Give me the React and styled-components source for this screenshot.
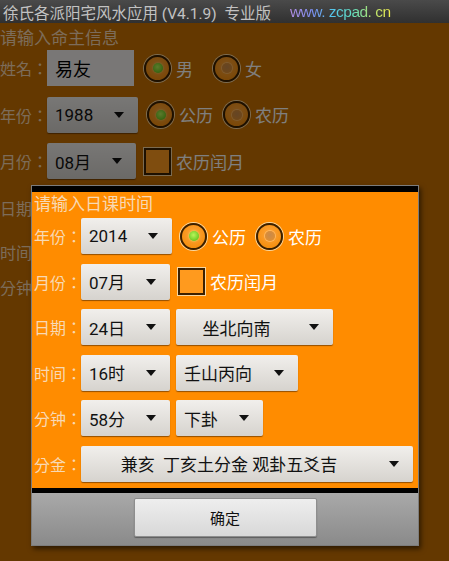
import React from "react";
import styled, { createGlobalStyle } from "styled-components";

const GlobalStyle = createGlobalStyle`
  html, body {
    margin: 0;
    padding: 0;
    background: #643700;
  }
  body {
    font-family: Roboto, "Noto Sans CJK SC", "Noto Sans", sans-serif;
  }
`;

const Screen = styled.div`
  width: 449px;
  height: 561px;
  overflow: hidden;
  display: flex;
  flex-direction: column;
`;

const TitleBar = styled.div`
  height: 23px;
  flex-shrink: 0;
  display: flex;
  align-items: center;
  padding-left: 3px;
  background: linear-gradient(#4a4a4a, #303030);
  box-sizing: border-box;
`;

const AppTitle = styled.span`
  font-size: 15.5px;
  color: #c2c2c2;
  white-space: pre;
`;

const SiteUrl = styled.span`
  margin-left: 19px;
  font-family: "Liberation Sans", Arial, sans-serif;
  font-size: 15.5px;
  letter-spacing: -0.5px;
  white-space: pre;
  background: linear-gradient(90deg, #b58ee6 0%, #7c8ef0 22%, #54c6ec 42%, #63e0c0 62%, #a6e07a 78%, #f2ec4c 100%);
  -webkit-background-clip: text;
  background-clip: text;
  color: transparent;
`;

const Content = styled.div`
  position: relative;
  flex: 1;
  background: #c87000;
`;

const Scrim = styled.div`
  position: absolute;
  inset: 0;
  background: rgba(0, 0, 0, 0.5);
`;

const Form = styled.div`
  display: flex;
  flex-direction: column;
  gap: 10.5px;
  padding-top: 3px;
`;

const Heading = styled.div`
  font-size: 17px;
  line-height: ${(p) => p.$h}px;
  height: ${(p) => p.$h}px;
  color: #f8d9b4;
  white-space: nowrap;
  margin-bottom: ${(p) => p.$mb || 0}px;
`;

const Row = styled.div`
  display: flex;
  align-items: center;
  height: 36px;
  margin-top: ${(p) => p.$mt || 0}px;
`;

const Label = styled.span`
  width: 47px;
  flex-shrink: 0;
  font-family: "Noto Sans CJK TC", "Noto Sans CJK SC", sans-serif;
  font-size: 16px;
  white-space: nowrap;
  color: #f8d9b4;
`;

const TextBox = styled.div`
  width: 87px;
  height: 36px;
  box-sizing: border-box;
  padding-left: 8px;
  display: flex;
  align-items: center;
  font-size: 18px;
  color: #000;
  background: #f2efec;
`;

const Spinner = styled.div`
  width: ${(p) => p.$w}px;
  height: 36px;
  box-sizing: border-box;
  margin-right: 6px;
  padding: 0 14px 0 8px;
  display: flex;
  align-items: center;
  gap: 8px;
  font-size: 17px;
  color: #111;
  border-radius: 2px;
  background: linear-gradient(#f1efec, #d6d3ce);
  box-shadow: 0 1px 1px rgba(60, 30, 0, 0.55);
  flex-shrink: 0;
`;

const SpinnerText = styled.span`
  flex: 1;
  text-align: ${(p) => (p.$center ? "center" : "left")};
  padding-right: ${(p) => (p.$center ? 12 : 0)}px;
  white-space: pre;
`;

const Arrow = styled.span`
  width: 0;
  height: 0;
  border-left: 5.5px solid transparent;
  border-right: 5.5px solid transparent;
  border-top: 6px solid #111;
`;

const Radio = styled.span`
  width: 27px;
  height: 27px;
  box-sizing: border-box;
  border-radius: 50%;
  border: 2px solid #3b2000;
  box-shadow: 0 0 0 1px #f7d7a2;
  background: radial-gradient(circle at 50% 40%, #ffa53c, #f28800);
  display: flex;
  align-items: center;
  justify-content: center;
  flex-shrink: 0;
  &::after {
    content: "";
    width: 10px;
    height: 10px;
    border-radius: 50%;
    background: ${(p) =>
      p.$on
        ? "radial-gradient(circle at 45% 40%, #b8f55a, #4fb80e)"
        : "radial-gradient(circle at 50% 40%, #c98a4a, #e5902c)"};
    box-shadow: ${(p) => (p.$on ? "0 0 2px #d8ff90" : "0 0 0 1px rgba(255,210,150,0.5)")};
  }
`;

const CheckBox = styled.span`
  width: 27px;
  height: 27px;
  box-sizing: border-box;
  border: 2px solid #3b2000;
  box-shadow: 0 0 0 1px #f7d7a2;
  background: #ff9a1e;
  flex-shrink: 0;
`;

const Option = styled.span`
  font-size: 17px;
  color: #fff;
  white-space: nowrap;
  margin: 0 ${(p) => p.$mr || 8}px 0 5px;
`;

const Choice = styled.div`
  display: flex;
  align-items: center;
  margin-left: ${(p) => p.$ml || 2}px;
`;

const Dialog = styled.div`
  position: absolute;
  left: 31px;
  top: 162px;
  width: 388px;
  box-sizing: border-box;
  border: 1px solid #7c7c7c;
  box-shadow: 2px 3px 5px rgba(0, 0, 0, 0.55);
  background: #000;
  padding-top: 6px;
  display: flex;
  flex-direction: column;
`;

const DialogBody = styled.div`
  background: #ff8c00;
  padding: 4px 4px 6px 2px;
  display: flex;
  flex-direction: column;
  gap: 9.6px;
`;

const ButtonBar = styled.div`
  margin-top: 5px;
  height: 52px;
  box-sizing: border-box;
  padding-top: 5px;
  display: flex;
  justify-content: center;
  background: linear-gradient(#a9a9a9, #8a8a8a);
`;

const OkButton = styled.button`
  width: 183px;
  height: 39px;
  border: 1px solid #8e8e8e;
  border-radius: 2px;
  background: linear-gradient(#eeeeee, #d8d8d8);
  box-shadow: 0 1px 1px rgba(0, 0, 0, 0.35);
  font-family: "Noto Sans CJK SC", sans-serif;
  font-size: 15px;
  color: #111;
`;

function Select({ w, text, center }) {
  return (
    <Spinner $w={w}>
      <SpinnerText $center={center}>{text}</SpinnerText>
      <Arrow />
    </Spinner>
  );
}

function CalendarChoice({ ml }) {
  return (
    <Choice $ml={ml}>
      <Radio $on />
      <Option $mr={10}>公历</Option>
      <Radio />
      <Option>农历</Option>
    </Choice>
  );
}

function LeapChoice() {
  return (
    <Choice>
      <CheckBox />
      <Option>农历闰月</Option>
    </Choice>
  );
}

export default function App() {
  return (
    <Screen>
      <GlobalStyle />
      <TitleBar>
        <AppTitle>{"徐氏各派阳宅风水应用 (V4.1.9)  专业版"}</AppTitle>
        <SiteUrl>{"www. zcpad. cn"}</SiteUrl>
      </TitleBar>
      <Content>
        <Form>
          <Heading $h={24} $mb={-10.5}>请输入命主信息</Heading>
          <Row>
            <Label>姓名：</Label>
            <TextBox>易友</TextBox>
            <Choice $ml={10}>
              <Radio $on />
              <Option $mr={20}>男</Option>
              <Radio />
              <Option>女</Option>
            </Choice>
          </Row>
          <Row>
            <Label>年份：</Label>
            <Select w={91} text="1988" />
            <CalendarChoice ml={3} />
          </Row>
          <Row>
            <Label>月份：</Label>
            <Select w={89} text="08月" />
            <LeapChoice />
          </Row>
          {/* the rest of these rows sits under the dialog; only the labels show */}
          <Row>
            <Label>日期：</Label>
          </Row>
          <Row $mt={-2}>
            <Label>时间：</Label>
          </Row>
          <Row $mt={-12}>
            <Label>分钟：</Label>
          </Row>
        </Form>
        <Scrim />
        <Dialog>
          <DialogBody>
            <Heading $h={17} $mb={-4.6}>请输入日课时间</Heading>
            <Row>
              <Label>年份：</Label>
              <Select w={91} text="2014" />
              <CalendarChoice />
            </Row>
            <Row>
              <Label>月份：</Label>
              <Select w={89} text="07月" />
              <LeapChoice />
            </Row>
            <Row>
              <Label>日期：</Label>
              <Select w={89} text="24日" />
              <Select w={157} text="坐北向南" center />
            </Row>
            <Row>
              <Label>时间：</Label>
              <Select w={89} text="16时" />
              <Select w={122} text="壬山丙向" />
            </Row>
            <Row>
              <Label>分钟：</Label>
              <Select w={89} text="58分" />
              <Select w={87} text="下卦" />
            </Row>
            <Row>
              <Label>分金：</Label>
              <Select w={332} text="兼亥  丁亥土分金 观卦五爻吉" center />
            </Row>
          </DialogBody>
          <ButtonBar>
            <OkButton>确定</OkButton>
          </ButtonBar>
        </Dialog>
      </Content>
    </Screen>
  );
}
